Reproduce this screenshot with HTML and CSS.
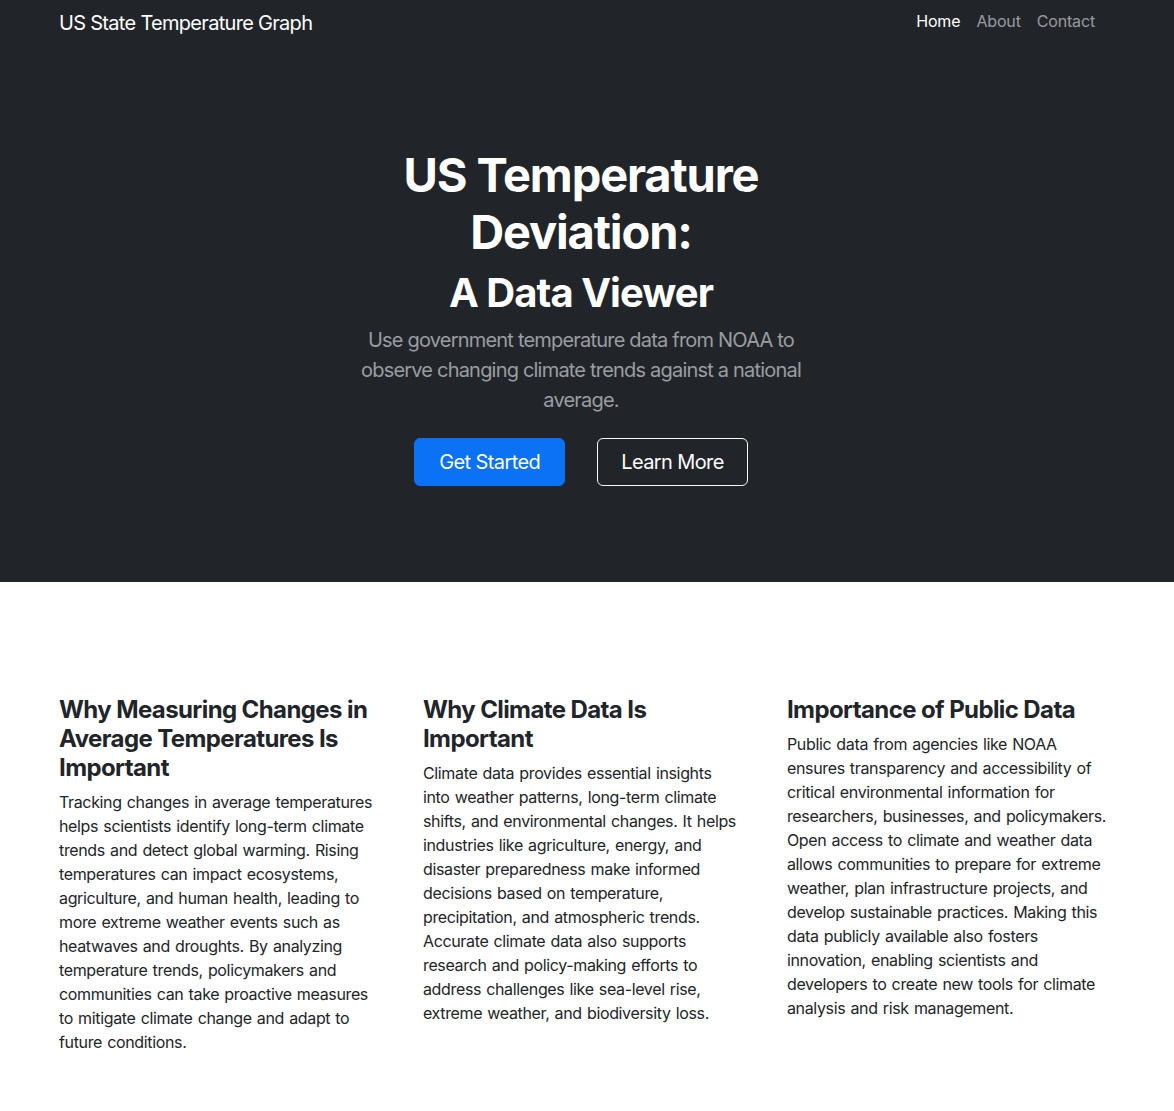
FILE: index.html
```html
<!DOCTYPE html>
<html lang="en">
<head>
<meta charset="utf-8">
<title>US State Temperature Graph</title>
<link rel="stylesheet" href="styles.css">
</head>
<body>
<header class="top">
  <nav class="navbar">
    <a class="brand" href="#">US State Temperature Graph</a>
    <ul class="nav">
      <li><a class="nav-link active" href="#">Home</a></li>
      <li><a class="nav-link" href="#">About</a></li>
      <li><a class="nav-link" href="#">Contact</a></li>
    </ul>
  </nav>
  <section class="hero">
    <h1 class="hero-title">US Temperature<br>Deviation:</h1>
    <h2 class="hero-sub">A Data Viewer</h2>
    <p class="lead">Use government temperature data from NOAA to observe changing climate trends against a national average.</p>
    <div class="actions">
      <a class="btn btn-primary" href="#">Get Started</a>
      <a class="btn btn-outline" href="#">Learn More</a>
    </div>
  </section>
</header>
<main class="features">
  <div class="col">
    <h3>Why Measuring Changes in Average Temperatures Is Important</h3>
    <p>Tracking changes in average temperatures helps scientists identify long-term climate trends and detect global warming. Rising temperatures can impact ecosystems, agriculture, and human health, leading to more extreme weather events such as heatwaves and droughts. By analyzing temperature trends, policymakers and communities can take proactive measures to mitigate climate change and adapt to future conditions.</p>
  </div>
  <div class="col">
    <h3>Why Climate Data Is Important</h3>
    <p>Climate data provides essential insights into weather patterns, long-term climate shifts, and environmental changes. It helps industries like agriculture, energy, and disaster preparedness make informed decisions based on temperature, precipitation, and atmospheric trends. Accurate climate data also supports research and policy-making efforts to address challenges like sea-level rise, extreme weather, and biodiversity loss.</p>
  </div>
  <div class="col">
    <h3>Importance of Public Data</h3>
    <p>Public data from agencies like NOAA ensures transparency and accessibility of critical environmental information for researchers, businesses, and policymakers. Open access to climate and weather data allows communities to prepare for extreme weather, plan infrastructure projects, and develop sustainable practices. Making this data publicly available also fosters innovation, enabling scientists and developers to create new tools for climate analysis and risk management.</p>
  </div>
</main>
</body>
</html>
```

FILE: styles.css
```css
* { box-sizing: border-box; }
html, body { margin: 0; padding: 0; }
body {
  font-family: Inter, "Noto Sans", "Liberation Sans", sans-serif;
  font-size: 16px;
  line-height: 1.5;
  color: #212529;
  background: #fff;
  letter-spacing: -0.022em;
}
a { text-decoration: none; }
.top { background: #212529; color: #fff; }
.navbar {
  display: flex;
  align-items: center;
  justify-content: space-between;
  padding: 6px 71px 0 59px;
  height: 43px;
}
.brand {
  color: #fff;
  font-size: 20px;
  line-height: 28px;
  letter-spacing: -0.035em;
  margin-top: -4px;
}
.nav {
  display: flex;
  list-style: none;
  margin: -8px 0 0;
  padding: 0;
}
.nav-link {
  display: block;
  padding: 0 8px;
  font-size: 16px;
  line-height: 24px;
  letter-spacing: -0.01em;
  color: rgba(255,255,255,0.55);
}
.nav-link.active { color: #fff; }
.hero {
  text-align: center;
  padding: 103px 12px 96px 0;
}
.hero-title {
  margin: 0;
  font-size: 47px;
  line-height: 57px;
  font-weight: 700;
  letter-spacing: -0.024em;
}
.hero-sub {
  margin: 9px 0 0;
  font-size: 40px;
  line-height: 48px;
  font-weight: 700;
  letter-spacing: -0.024em;
}
.lead {
  margin: 8px auto 23px;
  max-width: 460px;
  font-size: 20px;
  line-height: 30px;
  color: #9a9da1;
  font-weight: 400;
  letter-spacing: -0.04em;
}
.actions {
  display: flex;
  justify-content: center;
  gap: 32px;
}
.btn {
  display: inline-block;
  font-size: 20px;
  line-height: 30px;
  padding: 8px 24px;
  border-radius: 6px;
  border: 1px solid transparent;
  color: #fff;
  letter-spacing: -0.03em;
}
.btn-primary { background: #0b71f5; border-color: #0b71f5; }
.btn-outline { border-color: #f8f9fa; padding: 8px 23px; }
.features {
  display: grid;
  grid-template-columns: repeat(3, 319.7px);
  column-gap: 44.3px;
  padding: 113px 59px 58px;
}
.features h3 {
  margin: 0 0 8px;
  font-size: 24px;
  line-height: 29px;
  font-weight: 700;
  letter-spacing: -0.025em;
}
.features p {
  margin: 0;
  font-size: 16px;
  line-height: 24px;
  word-spacing: 1px;
}
```
